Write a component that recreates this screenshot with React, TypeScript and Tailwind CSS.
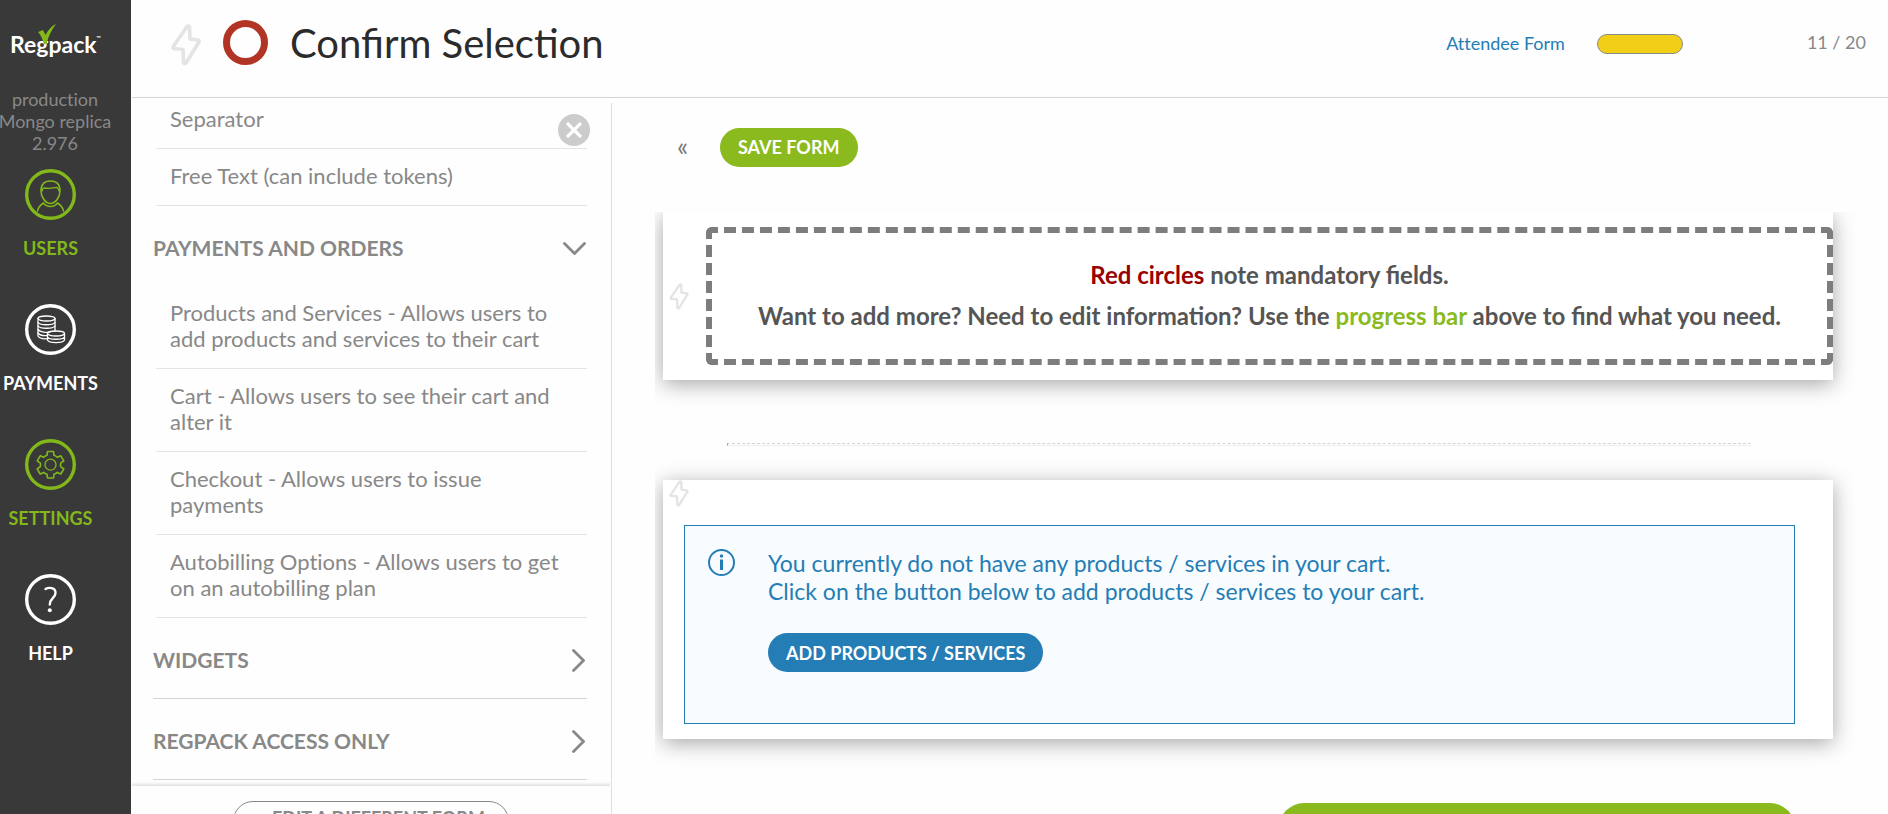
import * as React from "react"
import { clsx } from "clsx"

type IconProps = { className?: string }

function BoltIcon({ className }: IconProps) {
  return (
    <svg viewBox="0 0 30 42" fill="none" stroke="#e4e4e4" strokeWidth="3.600" strokeLinejoin="round" className={className} aria-hidden="true">
      <path d="M16 2.500 L2 23 Q1.500 24.500 3 24.500 L12 25.500 L12.500 38.500 Q13.500 40.500 15 39 L28 18 Q28.500 16.500 27 16 L19 15 L18.500 3 Q17.500 1.500 16 2.500 Z" />
    </svg>
  )
}

function ChevronRight() {
  return (
    <svg viewBox="0 0 13 23" width="13" height="23" fill="none" stroke="#888" strokeWidth="2.800" strokeLinecap="round" aria-hidden="true">
      <path d="M1.500 1.500 L11.500 11.500 L1.500 21.500" />
    </svg>
  )
}

function ChevronDown() {
  return (
    <svg viewBox="0 0 23 13" width="23" height="13" fill="none" stroke="#888" strokeWidth="2.800" strokeLinecap="round" aria-hidden="true">
      <path d="M1.500 1.500 L11.500 11.500 L21.500 1.500" />
    </svg>
  )
}

function Ring({ children }: { children: React.ReactNode }) {
  return (
    <svg viewBox="0 0 51 51" width="51" height="51" fill="none" stroke="currentColor" strokeWidth="1.300" strokeLinecap="round" strokeLinejoin="round" aria-hidden="true">
      <circle cx="25.500" cy="25.500" r="23.800" strokeWidth="3.400" />
      {children}
    </svg>
  )
}

function UsersIcon() {
  return (
    <Ring>
      <path d="M16 22 C16 15 20 12 25.500 12 C31 12 35 15 35 22 C35 28 30.500 34.500 25.500 34.500 C20.500 34.500 16 28 16 22 Z" strokeWidth="1.600" />
      <path d="M17 22 C18 20.500 17.500 18.500 19 19 C23 20 28 19 31.500 18.500 C33.500 18.500 33 20.500 34 22" />
      <path d="M12.500 42 C13 38.500 15.500 36 18.500 34 C20 36 22.500 37.500 25.500 37.500 C28.500 37.500 31 36 32.500 34 C35.500 36 38 38.500 38.500 42" strokeWidth="1.600" />
    </Ring>
  )
}

function PaymentsIcon() {
  return (
    <Ring>
      <ellipse cx="21.500" cy="14.500" rx="8.500" ry="2.500" />
      <path d="M13 14.500 V32 C14 34 18 35 22 34.700 M30 14.500 V27" />
      <path d="M13 18.500 C15 21.500 28 21.500 30 18.500 M13 22 C15 25 28 25 30 22 M13 25.500 C15 28.300 22 28.600 25 28 M13 29 C15 31.500 19 31.800 22 31.500" />
      <ellipse cx="31" cy="29.500" rx="8.500" ry="2.500" />
      <path d="M22.500 29.500 V36 C24 39.500 38 39.500 39.500 36 V29.500 M22.500 33 C24 36 38 36 39.500 33" />
    </Ring>
  )
}

function SettingsIcon() {
  return (
    <Ring>
      <path
        strokeWidth="1.600"
        d="M22.500 12.500 H28.500 L29 16.300 Q31 17 32.300 18.300 L35.800 16.800 L38.800 21.800 L35.700 24.200 Q35.300 26 35.700 27.600 L38.800 30 L35.800 35 L32.300 33.400 Q31 34.700 29 35.300 L28.500 39 H22.500 L22 35.300 Q20 34.700 18.700 33.400 L15.200 35 L12.200 30 L15.300 27.600 Q15.700 26 15.300 24.200 L12.200 21.800 L15.200 16.800 L18.700 18.300 Q20 17 22 16.300 Z"
      />
      <circle cx="25.500" cy="25.700" r="5.500" />
    </Ring>
  )
}

function HelpIcon() {
  return (
    <Ring>
      <path d="M20.500 15 C24 13 30.500 13.500 30.500 19 C30.500 24 25 24 24.800 30.500" strokeWidth="2.400" />
      <circle cx="24.800" cy="36.200" r="2" fill="currentColor" stroke="none" />
    </Ring>
  )
}

const navItems = [
  { label: "USERS", icon: <UsersIcon />, active: true },
  { label: "PAYMENTS", icon: <PaymentsIcon />, active: false },
  { label: "SETTINGS", icon: <SettingsIcon />, active: true },
  { label: "HELP", icon: <HelpIcon />, active: false },
]

const basicFields = ["Separator", "Free Text (can include tokens)"]

const paymentFields = [
  "Products and Services - Allows users to add products and services to their cart",
  "Cart - Allows users to see their cart and alter it",
  "Checkout - Allows users to issue payments",
  "Autobilling Options - Allows users to get on an autobilling plan",
]

function Logo() {
  return (
    <a href="#home" className="relative mt-6 ml-2.5 flex h-8 items-end text-[23px] leading-6 font-bold text-white">
      Regpack
      <span className="self-start pt-1 text-[6px] leading-5">™</span>
      <svg viewBox="0 0 18 20" width="18" height="20" className="absolute top-0 left-7" aria-hidden="true">
        <path d="M0 8 L5 6 L7.500 11 C10 6 13.500 2 18 0 C13.500 6 10.500 12 8.500 20 L6 20 C4.500 15 3 11 0 8 Z" fill="#83b81a" />
      </svg>
    </a>
  )
}

function Sidebar() {
  return (
    <aside className="w-[131px] shrink-0 bg-[#393939] [font-variant-ligatures:none]">
      <Logo />
      <p className="mt-8 flex w-[110px] flex-col items-center text-lg leading-[22px] whitespace-nowrap text-[#888]">
        <span>production</span>
        <span>Mongo replica</span>
        <span>2.976</span>
      </p>
      <nav className="mt-[15px] flex w-[101px] flex-col gap-[37px]">
        {navItems.map((item) => (
          <a
            key={item.label}
            href={"#" + item.label.toLowerCase()}
            className={clsx(
              "flex h-[98px] flex-col items-center justify-between text-lg leading-[38px] font-bold",
              item.active ? "text-[#83b81a]" : "text-white"
            )}
          >
            {item.icon}
            {item.label}
          </a>
        ))}
      </nav>
    </aside>
  )
}

function Header() {
  return (
    <header className="ml-px flex h-[98px] shrink-0 items-start border-b border-[#d4d4d4] pr-[22px] pl-[39px]">
      <BoltIcon className="mt-6 h-[42px] w-[30px]" />
      <span className="mt-5 ml-[22px] size-[45px] rounded-full border-7 border-[#b23425]" />
      <h1 className="mt-[19px] ml-[22px] text-[40px] leading-[48px] text-[#2b2b2b]">Confirm Selection</h1>
      <div className="mt-[34px] ml-auto flex h-5 items-center text-lg leading-5 [font-variant-ligatures:none]">
        <a href="#attendee-form" className="pb-0.5 text-[#247db5]">Attendee Form</a>
        <span className="ml-8 h-5 w-[86px] rounded-full border border-[#888] bg-[#f1cf16]" />
        <span className="ml-[124px] pb-1 text-[#888]">11 / 20</span>
      </div>
    </header>
  )
}

function FieldList({ fields }: { fields: string[] }) {
  return (
    <ul className="ml-[3px] [font-variant-ligatures:none]">
      {fields.map((field) => (
        <li key={field} className="border-b border-[#e4e4e4] pt-3.5 pr-6 pb-4 pl-3.5 text-[22px] leading-[26px]">
          {field}
        </li>
      ))}
    </ul>
  )
}

function GroupHeading({ title, open }: { title: string; open?: boolean }) {
  return (
    <button
      type="button"
      aria-expanded={!!open}
      className={clsx(
        "flex w-full items-center justify-between pt-1 text-[21px] font-bold",
        open ? "h-20 pr-px" : "h-[81px] border-b border-[#d4d4d4] pr-0.5"
      )}
    >
      {title}
      {open ? <ChevronDown /> : <ChevronRight />}
    </button>
  )
}

function FieldPanel() {
  return (
    <section className="relative mt-[5px] flex w-[481px] shrink-0 flex-col border-r border-[#dedede] text-[#888]">
      <div className="-mt-[5px] min-h-0 flex-1 overflow-hidden pr-6 pl-[22px]">
        <div className="-mt-1.5">
          <FieldList fields={basicFields} />
          <GroupHeading title="PAYMENTS AND ORDERS" open />
          <FieldList fields={paymentFields} />
          <GroupHeading title="WIDGETS" />
          <GroupHeading title="REGPACK ACCESS ONLY" />
        </div>
      </div>
      <button type="button" aria-label="Close" className="absolute top-[11px] right-[21px] flex size-8 items-center justify-center rounded-full bg-[#ccc]">
        <svg viewBox="0 0 16 16" width="16" height="16" stroke="#fff" strokeWidth="3.200" aria-hidden="true">
          <path d="M1 1 L15 15 M15 1 L1 15" />
        </svg>
      </button>
      <div className="mr-px ml-px h-8 overflow-hidden">
        <div className="h-1 bg-linear-to-b from-[#fefefe] to-[#e2e2e2]" />
        <button type="button" className="mx-auto mt-[15px] flex h-10 w-[276px] items-start justify-center rounded-full border border-[#888] text-lg leading-8 font-bold">
          &lt; EDIT A DIFFERENT FORM
        </button>
      </div>
    </section>
  )
}

function Card({ children, className }: { children: React.ReactNode; className?: string }) {
  return (
    <div className={clsx("bg-white shadow-[0_4px_20px_rgba(0,0,0,0.35)]", className)}>
      {children}
    </div>
  )
}

function Editor() {
  return (
    <main className="min-w-0 flex-1 overflow-hidden pl-[43px]">
      <div className="flex items-center pt-[30px] pl-[22px]">
        <button type="button" aria-label="Collapse panel" className="w-[43px] pb-1 text-left text-[26px] leading-8 text-[#777]">«</button>
        <button type="button" className="h-[39px] rounded-full bg-[#8aba1e] px-[18px] pb-0.5 text-lg font-bold text-white">SAVE FORM</button>
      </div>

      <div className="mt-[45px] overflow-hidden pr-[55px] pb-20 pl-2">
        <Card className="flex items-center overflow-hidden py-[15px] pl-1.5">
          <BoltIcon className="h-[27px] w-5 shrink-0" />
          <div className="ml-[17px] flex-1 rounded-md border-6 border-dashed border-[#7d7d7d] pt-[21px] pb-[23px] text-center text-2xl leading-[41px] font-bold text-[#555]">
            <p><span className="text-[#990000]">Red circles</span> note mandatory fields.</p>
            <p>
              Want to add more? Need to edit information? Use the{" "}
              <span className="text-[#8aba1e]">progress bar</span> above to find what you need.
            </p>
          </div>
        </Card>

        <hr className="mt-[63px] mr-[82px] ml-16 h-[3px] border-t border-b border-l border-t-[#d4d4d4] border-b-[#eee] border-l-[#999] [border-top-style:dashed]" />

        <Card className="mt-[34px] pr-[38px] pb-[15px] pl-1.5">
          <BoltIcon className="h-[27px] w-5" />
          <div className="mt-[18px] ml-[15px] flex h-[199px] items-start border border-[#247db5] bg-[#f8fcff] pt-[23px] pl-[23px] text-[23px] leading-7 text-[#247db5] [font-variant-ligatures:none]">
            <svg viewBox="0 0 27 27" width="27" height="27" fill="none" stroke="currentColor" strokeWidth="2" aria-hidden="true">
              <circle cx="13.500" cy="13.500" r="12.500" />
              <path d="M13.500 10.500 V21" strokeWidth="3" />
              <circle cx="13.500" cy="7" r="1.700" fill="currentColor" stroke="none" />
            </svg>
            <div className="ml-[33px]">
              <p>You currently do not have any products / services in your cart.</p>
              <p>Click on the button below to add products / services to your cart.</p>
              <button type="button" className="mt-7 h-[39px] rounded-full bg-[#247db5] px-[18px] text-lg font-bold text-white">
                ADD PRODUCTS / SERVICES
              </button>
            </div>
          </div>
        </Card>

        <button type="button" aria-label="Continue" className="mt-16 mr-[38px] ml-auto block h-[50px] w-[516px] rounded-full bg-[#8aba1e]" />
      </div>
    </main>
  )
}

export default function App() {
  return (
    <div className="flex h-screen overflow-hidden bg-[#fefefe] font-[Lato,sans-serif]">
      <Sidebar />
      <div className="flex min-w-0 flex-1 flex-col">
        <Header />
        <div className="flex min-h-0 flex-1">
          <FieldPanel />
          <Editor />
        </div>
      </div>
    </div>
  )
}
